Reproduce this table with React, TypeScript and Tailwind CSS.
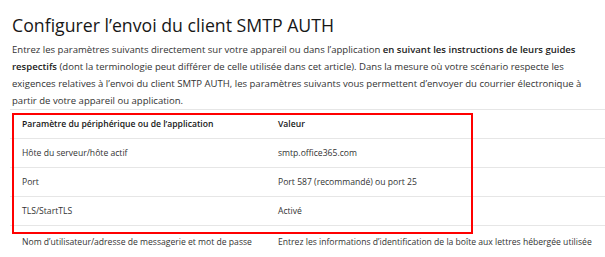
export default function App() {
  const rows = [
    ["Hôte du serveur/hôte actif", "smtp.office365.com"],
    ["Port", "Port 587 (recommandé) ou port 25"],
    ["TLS/StartTLS", "Activé"],
    [
      "Nom d’utilisateur/adresse de messagerie et mot de passe",
      "Entrez les informations d’identification de la boîte aux lettres hébergée utilisée",
    ],
  ];
  return (
    <div
      className="w-[605px] h-[257px] overflow-hidden bg-white relative"
      style={{ fontFamily: '"Open Sans", "Noto Sans", sans-serif' }}
    >
      <h1 className="pl-[12px] pt-[10px] text-[17.7px] leading-[30px] text-[#171717] font-normal whitespace-nowrap">
        Configurer l’envoi du client SMTP AUTH
      </h1>
      <p className="pl-[12px] mt-[1px] text-[9.55px] leading-[17px] text-[#333333] whitespace-nowrap">
        Entrez les paramètres suivants directement sur votre appareil ou dans l’application{" "}
        <b className="font-semibold text-[#222]">en suivant les instructions de leurs guides</b>
        <br />
        <b className="font-semibold text-[#222]">respectifs</b> (dont la terminologie peut différer de celle utilisée dans cet article). Dans la mesure où votre scénario respecte les
        <br />
        exigences relatives à l’envoi du client SMTP AUTH, les paramètres suivants vous permettent d’envoyer du courrier électronique à
        <br />
        partir de votre appareil ou application.
      </p>
      <div className="ml-[10px] w-[620px] border-t border-[#e6e6e6] text-[8.6px] text-[#333333]">
        <div className="flex h-[29px] items-center border-b border-[#e6e6e6] font-semibold text-[#171717] whitespace-nowrap">
          <div className="w-[268px] pl-[12px]">Paramètre du périphérique ou de l’application</div>
          <div>Valeur</div>
        </div>
        {rows.map(([a, b], i) => (
          <div
            key={i}
            className={`flex items-center whitespace-nowrap ${i < 3 ? "h-[29px] border-b border-[#e6e6e6]" : "h-[32px]"}`}
          >
            <div className="w-[268px] pl-[12px]">{a}</div>
            <div>{b}</div>
          </div>
        ))}
      </div>
      <div className="absolute left-[12px] top-[113px] w-[461px] h-[121px] border-2 border-[#ff0000]" />
    </div>
  );
}
